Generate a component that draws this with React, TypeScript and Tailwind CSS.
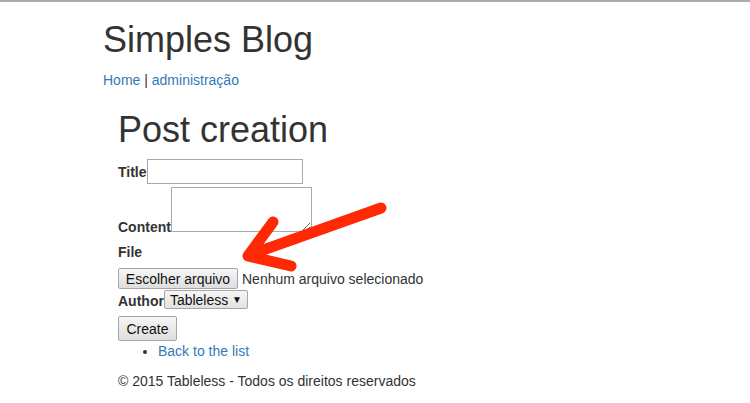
import React from 'react'

const font = { fontFamily: '"Liberation Sans", Arial, Helvetica, sans-serif' }

function GrayButton({ label, className }: { label: string; className: string }) {
  return (
    <button
      type="button"
      className={`box-border border border-[#a6a6a6] rounded-[2px] bg-gradient-to-b from-[#f6f6f6] to-[#dedede] text-[14px] leading-none text-[#111] ${className}`}
    >
      {label}
    </button>
  )
}

export default function App() {
  return (
    <div className="relative min-h-[403px] w-[750px] bg-white text-[#333] text-[14px] leading-5" style={font}>
      <div className="h-[2px] bg-[#ababab]" />

      <div className="pl-[103px]">
        {/* Header */}
        <h1 className="mt-[18px] mb-[10px] text-[36px] leading-[39.6px] font-normal">Simples Blog</h1>
        <div>
          <a href="#" className="text-[#337ab7]">Home</a> | <a href="#" className="text-[#337ab7]">administração</a>
        </div>

        {/* Form */}
        <div className="pl-[15px]">
          <h1 className="mt-[20px] mb-[10px] text-[36px] leading-[39.6px] font-normal">Post creation</h1>

          <div className="flex items-start">
            <label className="mt-[3px] font-bold">Title</label>
            <input className="box-border h-[25px] w-[156px] border border-[#a9a9a9] bg-white" />
          </div>

          <div className="mt-[3px] flex items-start">
            <label className="mt-[30px] font-bold">Content</label>
            <textarea className="box-border h-[45px] w-[141px] resize border border-[#a9a9a9] bg-white" />
          </div>

          <label className="mt-[5px] mb-[6px] block font-bold">File</label>
          <div className="flex items-center">
            <GrayButton label="Escolher arquivo" className="h-[21px] w-[120px]" />
            <span className="ml-[4px]">Nenhum arquivo selecionado</span>
          </div>

          <div className="mt-[1px] flex items-start">
            <label className="mt-[1px] font-bold">Author</label>
            <div className="box-border flex h-[19px] w-[84px] items-center justify-between border border-[#a6a6a6] rounded-[2px] bg-gradient-to-b from-[#f6f6f6] to-[#e2e2e2] pl-[5px] pr-[5px] text-[14px] leading-none text-[#111]">
              <span>Tableless</span>
              <span className="text-[10px]">▼</span>
            </div>
          </div>

          <GrayButton label="Create" className="mt-[5px] h-[25px] w-[59px]" />

          <ul className="list-disc pl-[40px]">
            <li>
              <a href="#" className="text-[#337ab7]">Back to the list</a>
            </li>
          </ul>

          <footer className="mt-[10px]">© 2015 Tableless - Todos os direitos reservados</footer>
        </div>
      </div>

      {/* red annotation arrow */}
      <svg className="pointer-events-none absolute left-0 top-0" width="750" height="403">
        <g stroke="#ff2a05" strokeWidth="11" strokeLinecap="round" strokeLinejoin="round" fill="none">
          <line x1="381" y1="208" x2="249" y2="255" />
          <polyline points="273,222 248,256 291,266" />
        </g>
      </svg>
    </div>
  )
}
